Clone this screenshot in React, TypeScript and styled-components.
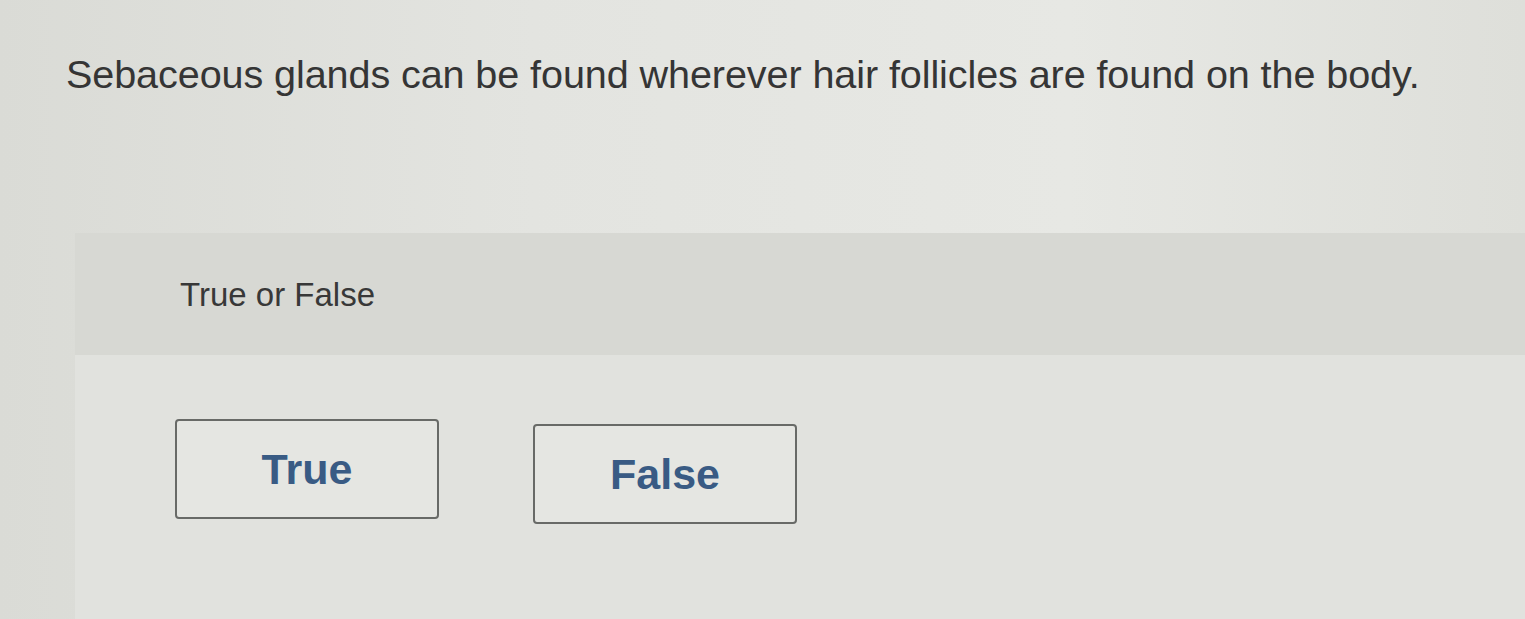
import React from 'react'
import styled, { createGlobalStyle } from 'styled-components'

const GlobalStyle = createGlobalStyle`
  html, body {
    margin: 0;
    padding: 0;
    background: #e1e2de;
    font-family: "Liberation Sans", Arial, sans-serif;
  }
`

const Page = styled.div`
  width: 1525px;
  height: 619px;
  overflow: hidden;
  display: flex;
  flex-direction: column;
  background: linear-gradient(90deg, #dadbd6 0%, #e3e4e0 35%, #e7e8e4 70%, #dedfda 100%);
`

const Question = styled.h1`
  margin: 0;
  padding: 54px 0 0 66px;
  height: 233px;
  box-sizing: border-box;
  font-size: 39.6px;
  font-weight: 400;
  line-height: 40px;
  color: #353535;
  letter-spacing: -0.1px;
`

const Panel = styled.section`
  margin-left: 75px;
  flex: 1;
  display: flex;
  flex-direction: column;
`

const PanelHeader = styled.div`
  height: 122px;
  box-sizing: border-box;
  padding: 43px 0 0 105px;
  background: #d7d8d3;
  font-size: 33px;
  line-height: 38px;
  color: #383838;
`

const Choices = styled.div`
  flex: 1;
  display: flex;
  gap: 94px;
  padding: 64px 0 0 100px;
  background: #e1e2de;
`

const Choice = styled.button<{ $drop: number }>`
  width: 264px;
  height: 100px;
  margin-top: ${(p) => p.$drop}px;
  border: 2px solid #686a67;
  border-radius: 4px;
  background: #e5e6e2;
  color: #395b84;
  font-family: "Liberation Sans", Arial, sans-serif;
  font-size: 43px;
  font-weight: 700;
  cursor: pointer;
`

export default function App() {
  return (
    <>
      <GlobalStyle />
      <Page>
        <Question>Sebaceous glands can be found wherever hair follicles are found on the body.</Question>
        <Panel>
          <PanelHeader>True or False</PanelHeader>
          <Choices>
            <Choice $drop={0}>True</Choice>
            <Choice $drop={5}>False</Choice>
          </Choices>
        </Panel>
      </Page>
    </>
  )
}
